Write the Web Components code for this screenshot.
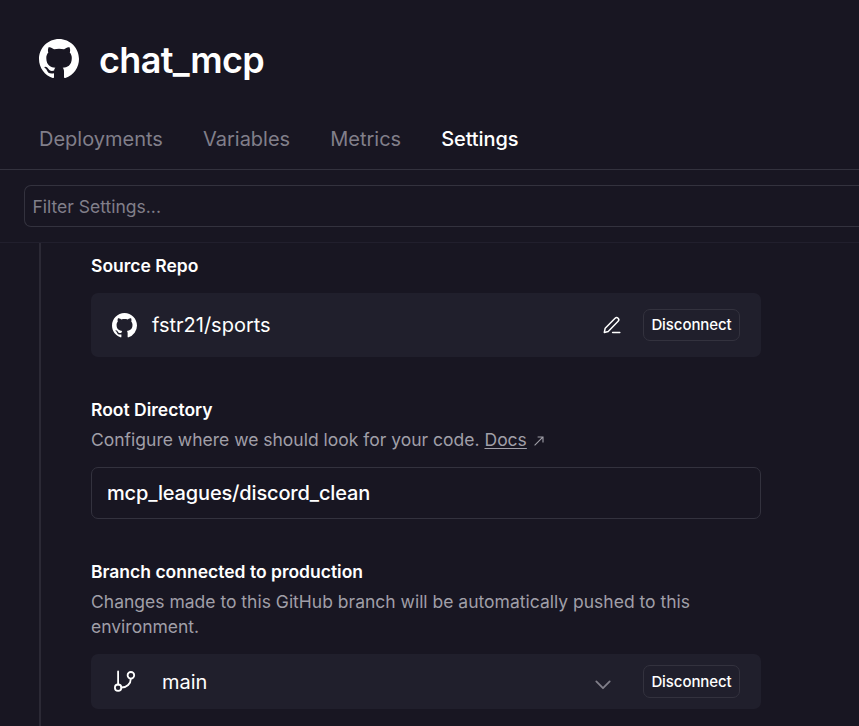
<!DOCTYPE html>
<html lang="en">
<head>
<meta charset="utf-8">
<title>chat_mcp</title>
<style>
html,body{margin:0;background:#181622}
body{height:726px;overflow:hidden;font-family:Inter,"Liberation Sans",sans-serif;color:#fff}
</style>
</head>
<body>
<service-panel></service-panel>
<script>
const define=(name,html)=>{
  const t=document.createElement('template');t.innerHTML=html;
  customElements.define(name,class extends HTMLElement{
    constructor(){super();this.attachShadow({mode:'open'}).append(t.content.cloneNode(true));}
  });
};
define('github-mark',`<style>:host{display:block;flex:none;width:40px;height:40px}svg{display:block;width:100%;height:100%}</style>
<svg viewBox="0 0 16 16" fill="#fff"><path d="M8 0C3.58 0 0 3.58 0 8c0 3.54 2.29 6.53 5.47 7.59.4.07.55-.17.55-.38 0-.19-.01-.82-.01-1.49-2.01.37-2.53-.49-2.69-.94-.09-.23-.48-.94-.82-1.13-.28-.15-.68-.52-.01-.53.63-.01 1.08.58 1.23.82.72 1.21 1.87.87 2.33.66.07-.52.28-.87.51-1.07-1.78-.2-3.64-.89-3.64-3.95 0-.87.31-1.59.82-2.15-.08-.2-.36-1.02.08-2.12 0 0 .67-.21 2.2.82.64-.18 1.32-.27 2-.27s1.36.09 2 .27c1.53-1.04 2.2-.82 2.2-.82.44 1.1.16 1.92.08 2.12.51.56.82 1.27.82 2.15 0 3.07-1.87 3.75-3.65 3.95.29.25.54.73.54 1.48 0 1.07-.01 1.93-.01 2.2 0 .21.15.46.55.38A8.01 8.01 0 0 0 16 8c0-4.42-3.58-8-8-8z"/></svg>`);
define('nav-tab',`<style>:host{display:block;font-size:20px;line-height:30px;color:#817f8a}:host([active]){color:#fff;font-weight:500;letter-spacing:-.07px}</style><slot></slot>`);
define('filter-bar',`<style>:host{display:block;padding:15px 0 15px 24px;border-bottom:1px solid #211f2d}
div{box-sizing:border-box;height:42px;border:1px solid #33323e;border-right:0;border-radius:7px 0 0 7px;padding-left:7.5px;font-size:17.5px;line-height:42px;color:#817f8a}</style><div><slot></slot></div>`);
define('outline-button',`<style>:host{display:block;flex:none;box-sizing:border-box;width:97px;height:var(--h,32px);border:1px solid #33323e;border-radius:7px;font-size:15px;font-weight:500;letter-spacing:-.08px;line-height:calc(var(--h,32px) - 2px);text-align:center}</style><slot></slot>`);
define('setting-card',`<style>:host{display:flex;align-items:center;box-sizing:border-box;width:670px;padding:0 21px;background:#201f2c;border-radius:7px;font-size:20px}</style><slot></slot>`);
define('setting-field',`<style>:host{display:block;width:670px}h2{margin:0;font-size:17.5px;line-height:25px;font-weight:600}.d{font-size:17.5px;line-height:25px;color:#a09fa8;margin-top:5px}</style>
<h2><slot name="title"></slot></h2><div class="d"><slot name="description"></slot></div><slot></slot>`);
define('text-field',`<style>:host{display:block;box-sizing:border-box;height:52px;border:1px solid #33323e;border-radius:7px;padding:0 15px;font-size:20px;font-weight:500;letter-spacing:-.16px;line-height:50px;margin-top:15px}</style><slot></slot>`);
define('service-panel',`<style>
:host{display:block}
header{display:flex;align-items:center;gap:20px;height:100px;padding:18px 0 0 39px;box-sizing:border-box}
h1{margin:0;padding-top:2px;font-size:36px;font-weight:600;line-height:44px;letter-spacing:-.65px}
nav{display:flex;gap:40px;height:70px;padding:24px 39px 0;box-sizing:border-box;border-bottom:1px solid #33323e}
main{margin-left:39px;height:483px;border-left:2px solid #2b2935;padding:10px 0 0 50px;box-sizing:border-box}
.repo{height:64px;margin-top:15px}
.repo github-mark{width:25px;height:25px}
.repo .n{margin-left:15px;flex:1}
.root{margin-top:40px}.branch{margin-top:40px}
.br{height:55px;margin-top:15px}.br .n{margin-left:25px;flex:1}
svg{display:block;flex:none}
.pen{margin-right:21px}.chev{margin:6px 32px 0 0}
a{text-decoration:underline;text-underline-offset:2px;text-decoration-thickness:1px}
.arrow{display:inline-block;margin-left:7px}
</style>
<header><github-mark></github-mark><h1>chat_mcp</h1></header>
<nav><nav-tab>Deployments</nav-tab><nav-tab>Variables</nav-tab><nav-tab>Metrics</nav-tab><nav-tab active>Settings</nav-tab></nav>
<filter-bar>Filter Settings...</filter-bar>
<main>
<setting-field><span slot="title">Source Repo</span>
<setting-card class="repo"><github-mark></github-mark><span class="n">fstr21/sports</span>
<svg class="pen" width="20" height="20" viewBox="0 0 20 20" fill="none" stroke="#fff" stroke-width="1.5" stroke-linecap="round" stroke-linejoin="round"><path d="M2.3 17.4l.9-4.2L13.1 3.3a2.1 2.1 0 0 1 3 3L6.2 16.4zM10.6 17.4h7.2"/></svg>
<outline-button>Disconnect</outline-button></setting-card></setting-field>
<setting-field class="root"><span slot="title">Root Directory</span><span slot="description">Configure where we should look for your code. <a>Docs</a><svg class="arrow" width="10" height="10" viewBox="0 0 10 10" fill="none" stroke="#a09fa8" stroke-width="1.1"><path d="M.6 9.4L8.8 1.2M3.6 1H9V6.4"/></svg></span>
<text-field>mcp_leagues/discord_clean</text-field></setting-field>
<setting-field class="branch"><span slot="title">Branch connected to production</span><span slot="description">Changes made to this GitHub branch will be automatically pushed to this environment.</span>
<setting-card class="br"><svg width="25" height="25" viewBox="0 0 25 25" fill="none" stroke="#fff" stroke-width="1.8" stroke-linecap="round"><path d="M6.1 2.5v13M18.8 9.8c0 5-4 8.7-9.2 8.7"/><circle cx="6.1" cy="18.7" r="3.2"/><circle cx="18.9" cy="6.3" r="3.3"/></svg><span class="n">main</span>
<svg class="chev" width="16" height="10" viewBox="0 0 16 10" fill="none" stroke="#817f8a" stroke-width="1.8" stroke-linecap="round" stroke-linejoin="round"><path d="M1.3 1.4L8 8.2l6.7-6.8"/></svg>
<outline-button style="--h:33px">Disconnect</outline-button></setting-card></setting-field>
</main>`);
</script>
</body>
</html>
